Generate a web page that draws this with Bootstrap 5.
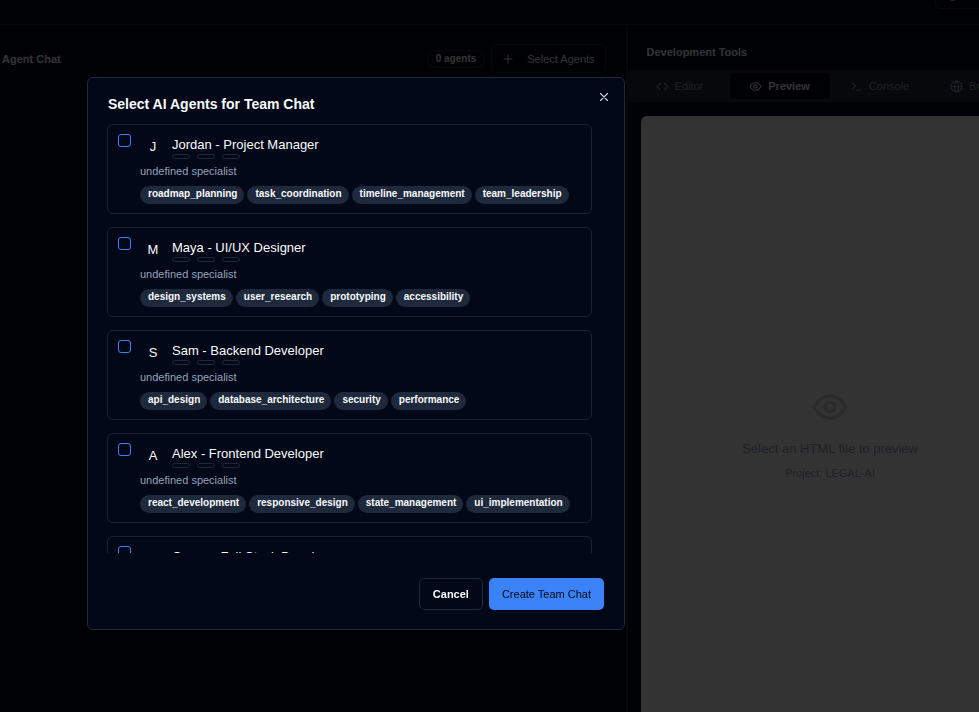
<!DOCTYPE html>
<html lang="en">
<head>
<meta charset="utf-8">
<meta name="viewport" content="width=device-width, initial-scale=1">
<title>Team Chat</title>
<link href="https://cdn.jsdelivr.net/npm/bootstrap@5.3.0/dist/css/bootstrap.min.css" rel="stylesheet">
<style>
:root{--ink:#020817;--line:#1e293b;--soft:#94a3b8;--text:#f8fafc;--blue:#3b82f6}
body{background:var(--ink);color:var(--text);font-family:"Liberation Sans",Arial,sans-serif;font-size:13px;line-height:20px}
svg{fill:none;stroke:currentColor;stroke-width:2;stroke-linecap:round;stroke-linejoin:round;flex:none}
button{color:inherit;font-size:11px;line-height:16px}
h1,h2{margin:0;line-height:16px;font-weight:700}
.topbar{height:25px;padding-bottom:15px;border-bottom:1px solid var(--line)}
.top-btn{flex:none;width:60px;height:29px;margin-right:-16px;padding:0 10px;border:1px solid var(--line);border-radius:5px;background:none}
.chat-pane{border-right:1px solid var(--line)}
.chat-head{padding:19px 20px 0 2px;gap:6px}
.pane-title{font-size:11px}
.count-pill{border:1px solid var(--line);border-radius:9px;padding:0 8px;height:18px;font-size:10px;line-height:15px;font-weight:700}
.outline-btn{border:1px solid var(--line);border-radius:5px;background:none;height:29px;padding:0 10px;gap:13px}
.dev-pane{width:36%;border-left:1px solid var(--line)}
.dev-inner{min-width:406px}
.dev-title{font-size:11px;padding:19px 19px 10px}
.tab-strip{background:var(--line);border-radius:5px;padding:3px 4px 3px 2px;color:var(--soft)}
.tab-strip button{background:none;border:0;border-radius:4px;height:26px;gap:6px;padding:0}
.tab-strip .active{background:var(--ink);color:var(--text);font-weight:700}
.preview-box{background:#fff;border-radius:6px 6px 0 0;margin:14px 14px 0 13px;padding-top:40px;color:var(--soft)}
.preview-main{font-size:13px;margin:13px 0 6px}
.preview-sub{font-size:11px;line-height:16px}
.shade{--bs-backdrop-opacity:.8}
.agent-dialog{max-width:538px;margin:77px 0 0 87px}
.agent-content{background:var(--ink);border:1px solid var(--line);border-radius:6px;color:var(--text)}
.agent-head{padding:18px 20px 12px;border:0}
.agent-head h2{font-size:14px}
.close-btn{position:absolute;top:12px;right:13px;padding:0;border:0;background:none;opacity:.8}
.agent-list{height:429px;gap:13px;overflow:hidden;padding:0 32px 0 19px}
.agent-card{flex:none;border:1px solid #1b2432;border-radius:6px;padding:9px 10px;gap:9px}
.agent-card .form-check-input{width:13px;height:13px;border:1px solid var(--blue);border-radius:3px;background-color:transparent;margin:0;flex:none}
.agent-line{gap:6px}
.agent-line label{line-height:22px}
.avatar-box{width:26px;height:26px;line-height:26px}
.mini-row{gap:7px;margin-top:-2px}
.mini-pill{width:18px;height:5px;border:1px solid #1e2836;border-radius:3px}
.spec{font-size:11px;line-height:16px;color:var(--soft);margin:3px 0 7px}
.tag-row{gap:3px}
.tag-pill{background:var(--line);border-radius:9px;padding:0 7px 0 8px;height:18px;font-size:10px;line-height:16px;font-weight:700}
.agent-foot{border:0;padding:25px 20px 19px;gap:6px}
.agent-foot button{margin:0;height:32px;border-radius:5px}
.cancel-btn{border:1px solid var(--line);background:none;padding:0 13px;font-weight:700}
.create-btn{border:0;background:var(--blue);color:var(--ink);padding:0 13px}
</style>
<script src="https://cdn.jsdelivr.net/npm/bootstrap@5.3.0/dist/js/bootstrap.bundle.min.js"></script>
</head>
<body class="vh-100 overflow-hidden d-flex flex-column">
<header class="topbar d-flex align-items-end justify-content-end overflow-hidden flex-shrink-0">
  <button class="top-btn d-flex align-items-center" type="button" aria-label="Tools"><svg width="12" height="12" viewBox="0 0 24 24"><path d="M3 3v18M10 22h8M14 22V6M10 6h8"/></svg></button>
</header>
<div class="d-flex flex-grow-1 overflow-hidden">
  <main class="chat-pane flex-grow-1">
    <div class="chat-head d-flex align-items-center">
      <h1 class="pane-title me-auto">Agent Chat</h1>
      <span class="count-pill">0 agents</span>
      <button class="outline-btn d-flex align-items-center" type="button"><svg width="12" height="12" viewBox="0 0 24 24"><path d="M4 12h16M12 4v16"/></svg>Select Agents</button>
    </div>
  </main>
  <aside class="dev-pane flex-shrink-0 overflow-hidden">
    <div class="dev-inner d-flex flex-column h-100">
      <h2 class="dev-title">Development Tools</h2>
      <div class="tab-strip d-flex">
        <button class="col d-flex align-items-center justify-content-center" type="button"><svg width="13" height="13" viewBox="0 0 24 24"><path d="m16 18 6-6-6-6M8 6l-6 6 6 6"/></svg>Editor</button>
        <button class="col active d-flex align-items-center justify-content-center" type="button"><svg width="13" height="13" viewBox="0 0 24 24"><path d="M2 12s3.500-7 10-7 10 7 10 7-3.500 7-10 7-10-7-10-7Z"/><circle cx="12" cy="12" r="3"/></svg>Preview</button>
        <button class="col d-flex align-items-center justify-content-center" type="button"><svg width="13" height="13" viewBox="0 0 24 24"><path d="m4 17 6-6-6-6M12 19h8"/></svg>Console</button>
        <button class="col d-flex align-items-center justify-content-center" type="button"><svg width="13" height="13" viewBox="0 0 24 24"><circle cx="12" cy="12" r="10"/><path d="M12 2a14.500 14.500 0 0 0 0 20 14.500 14.500 0 0 0 0-20M2 12h20"/></svg>Browser</button>
      </div>
      <div class="preview-box flex-grow-1 d-flex flex-column align-items-center justify-content-center">
        <svg class="opacity-50" width="38" height="38" viewBox="0 0 24 24"><path d="M2 12s3.500-7 10-7 10 7 10 7-3.500 7-10 7-10-7-10-7Z"/><circle cx="12" cy="12" r="3"/></svg>
        <div class="preview-main">Select an HTML file to preview</div>
        <div class="preview-sub">Project: LEGAL-AI</div>
      </div>
    </div>
  </aside>
</div>
<div class="modal-backdrop show shade"></div>
<div class="modal d-block" role="dialog" aria-modal="true" aria-labelledby="dlgTitle">
  <div class="modal-dialog agent-dialog">
    <div class="modal-content agent-content">
      <div class="modal-header agent-head">
        <h2 id="dlgTitle">Select AI Agents for Team Chat</h2>
        <button class="close-btn d-flex" type="button" aria-label="Close"><svg width="14" height="14" viewBox="0 0 24 24"><path d="M18 6 6 18M6 6l12 12"/></svg></button>
      </div>
      <div class="agent-list d-flex flex-column">
        <div class="agent-card d-flex">
          <input class="form-check-input" type="checkbox" id="a1">
          <div>
            <div class="agent-line d-flex"><span class="avatar-box text-center">J</span><div><label class="d-block" for="a1">Jordan - Project Manager</label><div class="mini-row d-flex"><i class="mini-pill"></i><i class="mini-pill"></i><i class="mini-pill"></i></div></div></div>
            <p class="spec">undefined specialist</p>
            <div class="tag-row d-flex"><span class="tag-pill">roadmap_planning</span><span class="tag-pill">task_coordination</span><span class="tag-pill">timeline_management</span><span class="tag-pill">team_leadership</span></div>
          </div>
        </div>
        <div class="agent-card d-flex">
          <input class="form-check-input" type="checkbox" id="a2">
          <div>
            <div class="agent-line d-flex"><span class="avatar-box text-center">M</span><div><label class="d-block" for="a2">Maya - UI/UX Designer</label><div class="mini-row d-flex"><i class="mini-pill"></i><i class="mini-pill"></i><i class="mini-pill"></i></div></div></div>
            <p class="spec">undefined specialist</p>
            <div class="tag-row d-flex"><span class="tag-pill">design_systems</span><span class="tag-pill">user_research</span><span class="tag-pill">prototyping</span><span class="tag-pill">accessibility</span></div>
          </div>
        </div>
        <div class="agent-card d-flex">
          <input class="form-check-input" type="checkbox" id="a3">
          <div>
            <div class="agent-line d-flex"><span class="avatar-box text-center">S</span><div><label class="d-block" for="a3">Sam - Backend Developer</label><div class="mini-row d-flex"><i class="mini-pill"></i><i class="mini-pill"></i><i class="mini-pill"></i></div></div></div>
            <p class="spec">undefined specialist</p>
            <div class="tag-row d-flex"><span class="tag-pill">api_design</span><span class="tag-pill">database_architecture</span><span class="tag-pill">security</span><span class="tag-pill">performance</span></div>
          </div>
        </div>
        <div class="agent-card d-flex">
          <input class="form-check-input" type="checkbox" id="a4">
          <div>
            <div class="agent-line d-flex"><span class="avatar-box text-center">A</span><div><label class="d-block" for="a4">Alex - Frontend Developer</label><div class="mini-row d-flex"><i class="mini-pill"></i><i class="mini-pill"></i><i class="mini-pill"></i></div></div></div>
            <p class="spec">undefined specialist</p>
            <div class="tag-row d-flex"><span class="tag-pill">react_development</span><span class="tag-pill">responsive_design</span><span class="tag-pill">state_management</span><span class="tag-pill">ui_implementation</span></div>
          </div>
        </div>
        <div class="agent-card d-flex">
          <input class="form-check-input" type="checkbox" id="a5">
          <div>
            <div class="agent-line d-flex"><span class="avatar-box text-center">C</span><div><label class="d-block" for="a5">Casey - Full Stack Developer</label><div class="mini-row d-flex"><i class="mini-pill"></i><i class="mini-pill"></i><i class="mini-pill"></i></div></div></div>
            <p class="spec">undefined specialist</p>
          </div>
        </div>
      </div>
      <div class="modal-footer agent-foot"><button class="cancel-btn" type="button">Cancel</button><button class="create-btn" type="button">Create Team Chat</button></div>
    </div>
  </div>
</div>
</body>
</html>
